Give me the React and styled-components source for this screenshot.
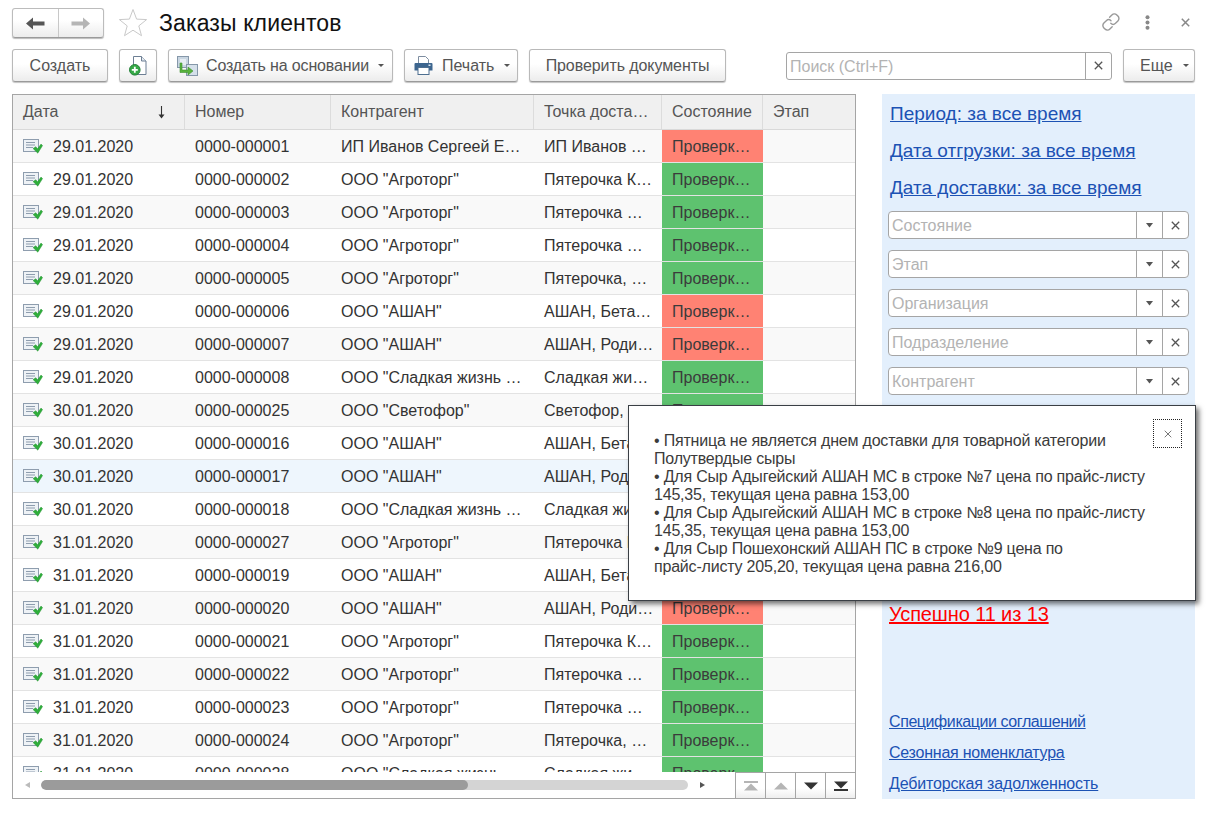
import React from "react";
import styled, { createGlobalStyle } from "styled-components";

const Global = createGlobalStyle`
  html, body { margin: 0; padding: 0; background: #fff; }
  body { font-family: "Liberation Sans", Arial, sans-serif; font-size: 16px; color: #333; }
`;

const Page = styled.div`
  position: relative; width: 1214px; height: 814px; overflow: hidden; box-sizing: border-box;
  padding: 8px 19px 0 12px; display: flex; flex-direction: column;
`;
const TitleRow = styled.div`display: flex; align-items: center; height: 30px;`;
const NavGroup = styled.div`
  display: flex; width: 92px; height: 30px; box-sizing: border-box; border: 1px solid #bcbcbc; border-bottom-color: #9a9a9a;
  border-radius: 3px; background: linear-gradient(#fff 40%, #ececec);
  box-shadow: 0 1px 1px #bbb;
`;
const NavCell = styled.div`
  flex: 1; display: flex; align-items: center; justify-content: center;
  & + & { border-left: 1px solid #c8c8c8; }
`;
const StarBox = styled.div`margin: 0 11px 0 14px; width: 30px; height: 30px; display: flex;`;
const Title = styled.h1`margin: 0; font-weight: 400; font-size: 23px; letter-spacing: .13px; color: #111; flex: 1; line-height: 30px;`;
const Window = styled.div`display: flex; align-items: center; margin: 0 5px 2px 0;`;
const WinIcon = styled.div`display: flex; align-items: center; justify-content: center; margin-left: ${p => p.$gap}px;`;

const Toolbar = styled.div`display: flex; align-items: center; margin-top: 11px; height: 33px;`;
const Btn = styled.div`
  box-sizing: border-box; height: 33px; width: ${p => p.$w}px; margin-left: ${p => p.$gap || 0}px; flex: none;
  padding-left: ${p => p.$pl || 0}px;
  display: flex; align-items: center; justify-content: ${p => p.$center ? "center" : "flex-start"};
  border: 1px solid #b9b9b9; border-bottom-color: #9a9a9a; border-radius: 3px;
  background: linear-gradient(#fff 45%, #ececec);
  box-shadow: 0 1px 1px #c4c4c4;
  color: #555; font-size: 16px; white-space: nowrap; letter-spacing: ${p => p.$ls || 0}px;
`;
const BtnIcon = styled.span`display: flex; margin-right: ${p => p.$mr}px;`;
const Caret = styled.span`
  width: 0; height: 0; border: 3px solid transparent; border-top: 3px solid #555; border-bottom: 0;
  margin-left: ${p => p.$ml}px; flex: none;
`;
const Search = styled.div`
  margin-left: 60px; width: 326px; height: 28px; box-sizing: border-box; display: flex; flex: none;
  border: 1px solid #a5a5a5; border-radius: 3px; background: #fff;
`;
const Placeholder = styled.div`flex: 1; padding-left: 3px; color: #b3b3b3; font-size: 16px; line-height: 28px; white-space: nowrap;`;
const FieldBtn = styled.div`width: 26px; box-sizing: border-box; flex: none; border-left: 1px solid #a5a5a5; display: flex; align-items: center; justify-content: center;`;

const Main = styled.div`display: flex; margin-top: 12px; height: 705px;`;
const Table = styled.div`
  width: 844px; box-sizing: border-box; border: 1px solid #a5a5a5; display: flex; flex-direction: column; flex: none;
`;
const Cols = "172px 146px 203px 128px 101px 92px";
const Head = styled.div`
  display: grid; grid-template-columns: ${Cols}; height: 35px; box-sizing: border-box; flex: none;
  background: #f0f0f0; border-bottom: 1px solid #d9d9d9;
`;
const HeadCell = styled.div`
  position: relative; box-sizing: border-box; padding-left: 10px; line-height: 33px; color: #555; white-space: nowrap;
  border-right: ${p => p.$last ? 0 : "1px solid #dcdcdc"}; font-size: 16px;
`;
const SortArrow = styled.span`position: absolute; right: 18px; top: 11px; display: flex;`;
const Body = styled.div`height: 642px; overflow: hidden; flex: none;`;
const Row = styled.div`
  display: grid; grid-template-columns: ${Cols}; height: 33px; box-sizing: border-box; border-bottom: 1px solid #e3e3e3;
  background: ${p => p.$sel ? "#eef6fd" : p.$odd ? "#f9f9f9" : "#fff"};
`;
const Cell = styled.div`
  box-sizing: border-box; padding-left: 10px; line-height: 34px; color: #333; white-space: nowrap; overflow: hidden; font-size: 16px;
`;
const DateCell = styled(Cell)`display: flex; align-items: flex-start;`;
const DocWrap = styled.span`display: flex; margin: 8px 10px 0 0; flex: none;`;
const StateCell = styled(Cell)`background: ${p => p.$c === "r" ? "#ff8273" : "#5ec26f"}; color: #3b3b3b;`;
const Footer = styled.div`display: flex; align-items: stretch; flex: 1; background: #fff; position: relative;`;
const ScrollArea = styled.div`flex: 1; display: flex; align-items: center; padding-left: 12px;`;
const Track = styled.div`margin-left: 11px; width: 647px; height: 10px; border-radius: 5px; background: #d4d4d4; overflow: hidden; flex: none;`;
const Thumb = styled.div`height: 10px; border-radius: 5px; background: #9b9b9b;`;
const ArrowL = styled.span`width: 0; height: 0; border: 3px solid transparent; border-right: 5px solid #bbb; border-left: 0; flex: none;`;
const ArrowR = styled.span`width: 0; height: 0; border: 3px solid transparent; border-left: 5px solid #555; border-right: 0; margin-left: 12px; flex: none;`;
const PageBtn = styled.div`
  width: 30px; box-sizing: border-box; display: flex; align-items: center; justify-content: center;
  border-left: 1px solid #a5a5a5; border-top: 1px solid #a5a5a5; background: linear-gradient(#fff 60%, #eee); flex: none;
`;

const Side = styled.div`
  margin-left: 26px; width: 313px; box-sizing: border-box; background: #e3effc; padding: 9px 6px 0 6px;
  display: flex; flex-direction: column; flex: none;
`;
const BigLink = styled.a`
  display: block; align-self: flex-start; margin: 0 0 15px 2px; font-size: 19px; line-height: 22px; color: #1c52b4; text-decoration: underline; white-space: nowrap;
`;
const Field = styled.div`
  display: flex; height: 28px; box-sizing: border-box; border: 1px solid #a5a5a5; border-radius: 4px; background: #fff;
  width: 301px; margin-bottom: 11px; flex: none;
`;
const RedLink = styled.a`
  display: block; align-self: flex-start; margin: 196px 0 0 1px; font-size: 20px; letter-spacing: -.12px; line-height: 24px; color: #f00; text-decoration: underline; white-space: nowrap;
`;
const Spacer = styled.div`flex: 1;`;
const SmallLink = styled.a`
  display: block; align-self: flex-start; margin: 0 0 13px 1px; font-size: 16px; letter-spacing: ${p => p.$ls}px; line-height: 18px; color: #1c52b4; text-decoration: underline; white-space: nowrap;
`;

const Popup = styled.div`
  position: absolute; left: 628px; top: 405px; width: 568px; height: 196px; box-sizing: border-box;
  background: #fff; border: 1px solid #3a3f45; box-shadow: 3px 3px 5px rgba(0,0,0,.55);
  padding: 26px 25px 0 25px; font-size: 16px; line-height: 18px; color: #3b3b3b; letter-spacing: -.2px;
`;
const PopLine = styled.div`white-space: nowrap;`;
const PopClose = styled.div`
  position: absolute; right: 13px; top: 13px; width: 29px; height: 29px; box-sizing: border-box; border: 1px dotted #222;
  display: flex; align-items: center; justify-content: center;
`;

const Cross = ({ s = 9, c = "#555", w = 1.3 }) => (
  <svg width={s} height={s} viewBox="0 0 9 9"><path d="M.8.8l7.4 7.4M8.2.8L.8 8.2" stroke={c} strokeWidth={w} fill="none" /></svg>
);
const FieldCaret = () => (
  <svg width="7" height="5" viewBox="0 0 7 5"><path d="M0 0h7L3.5 4.5z" fill="#555" /></svg>
);
const NavArrow = ({ c, flip }) => (
  <svg width="19" height="13" viewBox="0 0 19 13" style={flip ? { transform: "scaleX(-1)" } : undefined}>
    <path d="M0 6.5L7 .5v4h11.5v4H7v4z" fill={c} />
  </svg>
);
const Star = () => (
  <svg width="30" height="30" viewBox="0 0 30 30">
    <path d="M15 1.5l3.6 9.6 10 .5-7.8 6.3 2.7 9.8L15 22.2l-8.5 5.5 2.7-9.8-7.8-6.3 10-.5z" fill="#fff" stroke="#c9c9c9" strokeWidth="1" />
  </svg>
);
const LinkIcon = () => (
  <svg width="20" height="20" viewBox="0 0 20 20" fill="none" stroke="#999" strokeWidth="1.4" strokeLinecap="round">
    <path d="M8.6 5.2l2.3-2.3a3.4 3.4 0 0 1 4.9 0l1.1 1.1a3.4 3.4 0 0 1 0 4.9l-2.4 2.4a3.4 3.4 0 0 1-4.7 0" />
    <path d="M11.2 14.8l-2.3 2.3a3.4 3.4 0 0 1-4.9 0l-1.1-1.1a3.4 3.4 0 0 1 0-4.9l2.4-2.4a3.4 3.4 0 0 1 4.7 0" />
  </svg>
);
const Dots = () => (
  <svg width="5" height="15" viewBox="0 0 5 15" fill="#888"><circle cx="2.5" cy="2.2" r="2" /><circle cx="2.5" cy="7.5" r="2" /><circle cx="2.5" cy="12.8" r="2" /></svg>
);
const NewDoc = () => (
  <svg width="18" height="20" viewBox="0 0 18 20">
    <path d="M4.5.5h8l4.5 4.5v13.5H4.5z" fill="#fff" stroke="#6d7f94" />
    <path d="M12.5.5V5H17" fill="#e5ebf1" stroke="#6d7f94" />
    <circle cx="5.8" cy="13.8" r="5.3" fill="#36a946" stroke="#24803a" />
    <path d="M5.8 10.8v6M2.8 13.8h6" stroke="#fff" strokeWidth="1.8" />
  </svg>
);
const BasedOn = () => (
  <svg width="21" height="20" viewBox="0 0 21 20">
    <rect x=".5" y=".5" width="11" height="11" fill="#c9d6e2" stroke="#8597a9" />
    <rect x="3" y="3" width="6" height="6" fill="#e6edf3" />
    <rect x="9.5" y="8.5" width="11" height="11" fill="#d5e0ea" stroke="#8597a9" />
    <path d="M5 7v7h6v-3l5 4-5 4v-2.5H3V7z" fill="#58b23c" stroke="#3e9130" strokeWidth=".6" />
  </svg>
);
const Printer = () => (
  <svg width="19" height="19" viewBox="0 0 19 19">
    <path d="M4.5.5h7l3 3v4h-10z" fill="#fff" stroke="#7d8da0" />
    <path d="M1.5 7h16a1 1 0 0 1 1 1v6.5h-18V8a1 1 0 0 1 1-1z" fill="#3d668f" />
    <rect x="4" y="11.5" width="11" height="7" fill="#fff" stroke="#4e6f90" />
    <rect x="14.5" y="8.5" width="2" height="1.5" fill="#dfe7ef" />
  </svg>
);
const DocCheck = () => (
  <svg width="20" height="17" viewBox="0 0 20 17">
    <rect x=".5" y="1.5" width="15" height="12" fill="#eef2f6" stroke="#8e9dae" />
    <path d="M3 4.5h9M3 7h9M3 9.5h7" stroke="#8e9dae" strokeWidth="1" />
    <path d="M10 10.5l2.8-1.8 1.8 2.1L18 6l1.6 1.6-4.8 7.6z" fill="#2fae3b" stroke="#1f8a2c" strokeWidth=".4" />
  </svg>
);
const Sort = () => (
  <svg width="9" height="13" viewBox="0 0 9 13"><path d="M4.5 0v11" stroke="#333" strokeWidth="1.1" /><path d="M1.5 8.5h6L4.5 12.5z" fill="#333" /></svg>
);
const PageIcon = ({ c, up, bar }) => (
  <svg width="14" height="10" viewBox="0 0 14 10" style={up ? undefined : { transform: "scaleY(-1)" }}>
    {bar && <rect x="0" y="0" width="14" height="2" fill={c} />}
    <path d={bar ? "M7 2.5L14 9.5H0z" : "M7 1.5L14 8.5H0z"} fill={c} />
  </svg>
);

const AG = 'ООО "Агроторг"', AS = 'ООО "АШАН"', SL = 'ООО "Сладкая жизнь …';
const rows = [
  ["29.01.2020", "0000-000001", "ИП Иванов Сергеей Е…", "ИП Иванов …", "r"],
  ["29.01.2020", "0000-000002", AG, "Пятерочка К…", "g"],
  ["29.01.2020", "0000-000003", AG, "Пятерочка …", "g"],
  ["29.01.2020", "0000-000004", AG, "Пятерочка …", "g"],
  ["29.01.2020", "0000-000005", AG, "Пятерочка, …", "g"],
  ["29.01.2020", "0000-000006", AS, "АШАН, Бета…", "r"],
  ["29.01.2020", "0000-000007", AS, "АШАН, Роди…", "r"],
  ["29.01.2020", "0000-000008", SL, "Сладкая жи…", "g"],
  ["30.01.2020", "0000-000025", 'ООО "Светофор"', "Светофор, …", "g"],
  ["30.01.2020", "0000-000016", AS, "АШАН, Бета…", "g"],
  ["30.01.2020", "0000-000017", AS, "АШАН, Роди…", "g"],
  ["30.01.2020", "0000-000018", SL, "Сладкая жи…", "g"],
  ["31.01.2020", "0000-000027", AG, "Пятерочка К…", "g"],
  ["31.01.2020", "0000-000019", AS, "АШАН, Бета…", "g"],
  ["31.01.2020", "0000-000020", AS, "АШАН, Роди…", "r"],
  ["31.01.2020", "0000-000021", AG, "Пятерочка К…", "g"],
  ["31.01.2020", "0000-000022", AG, "Пятерочка …", "g"],
  ["31.01.2020", "0000-000023", AG, "Пятерочка …", "g"],
  ["31.01.2020", "0000-000024", AG, "Пятерочка, …", "g"],
  ["31.01.2020", "0000-000028", SL, "Сладкая жи…", "g"],
];
const heads = ["Дата", "Номер", "Контрагент", "Точка доста…", "Состояние", "Этап"];
const filters = ["Состояние", "Этап", "Организация", "Подразделение", "Контрагент"];
const popLines = [
  "• Пятница не является днем доставки для товарной категории",
  "Полутвердые сыры",
  "• Для Сыр Адыгейский АШАН МС в строке №7 цена по прайс-листу",
  "145,35, текущая цена равна 153,00",
  "• Для Сыр Адыгейский АШАН МС в строке №8 цена по прайс-листу",
  "145,35, текущая цена равна 153,00",
  "• Для Сыр Пошехонский АШАН ПС в строке №9 цена по",
  "прайс-листу 205,20, текущая цена равна 216,00",
];

export default function App() {
  return (
    <Page>
      <Global />
      <TitleRow>
        <NavGroup>
          <NavCell><NavArrow c="#555" /></NavCell>
          <NavCell><NavArrow c="#b5b5b5" flip /></NavCell>
        </NavGroup>
        <StarBox><Star /></StarBox>
        <Title>Заказы клиентов</Title>
        <Window>
          <WinIcon $gap={0}><LinkIcon /></WinIcon>
          <WinIcon $gap={24}><Dots /></WinIcon>
          <WinIcon $gap={31}><Cross s={9} c="#888" w={1.5} /></WinIcon>
        </Window>
      </TitleRow>
      <Toolbar>
        <Btn $w={96} $center>Создать</Btn>
        <Btn $w={38} $gap={11} $center><NewDoc /></Btn>
        <Btn $w={225} $gap={11} $pl={8} $ls={-0.15}><BtnIcon $mr={8}><BasedOn /></BtnIcon>Создать на основании<Caret $ml={9} /></Btn>
        <Btn $w={114} $gap={11} $pl={9}><BtnIcon $mr={9}><Printer /></BtnIcon>Печать<Caret $ml={10} /></Btn>
        <Btn $w={197} $gap={11} $center $ls={-0.08}>Проверить документы</Btn>
        <Search>
          <Placeholder>Поиск (Ctrl+F)</Placeholder>
          <FieldBtn><Cross /></FieldBtn>
        </Search>
        <Btn $w={72} $gap={11} $pl={16}>Еще<Caret $ml={10} /></Btn>
      </Toolbar>
      <Main>
        <Table>
          <Head>
            {heads.map((h, i) => (
              <HeadCell key={h} $last={i === 5}>
                {h}{i === 0 && <SortArrow><Sort /></SortArrow>}
              </HeadCell>
            ))}
          </Head>
          <Body>
            {rows.map((r, i) => (
              <Row key={r[1]} $odd={i % 2 === 0} $sel={i === 10}>
                <DateCell><DocWrap><DocCheck /></DocWrap>{r[0]}</DateCell>
                <Cell>{r[1]}</Cell>
                <Cell>{r[2]}</Cell>
                <Cell>{r[3]}</Cell>
                <StateCell $c={r[4]}>Проверк…</StateCell>
                <Cell />
              </Row>
            ))}
          </Body>
          <Footer>
            <ScrollArea>
              <ArrowL />
              <Track><Thumb style={{ width: `${(427 / 647) * 100}%` }} /></Track>
              <ArrowR />
            </ScrollArea>
            <PageBtn><PageIcon c="#b5b5b5" up bar /></PageBtn>
            <PageBtn><PageIcon c="#b5b5b5" up /></PageBtn>
            <PageBtn><PageIcon c="#333" /></PageBtn>
            <PageBtn><PageIcon c="#333" bar /></PageBtn>
          </Footer>
        </Table>
        <Side>
          <BigLink>Период: за все время</BigLink>
          <BigLink>Дата отгрузки: за все время</BigLink>
          <BigLink style={{ marginBottom: 12 }}>Дата доставки: за все время</BigLink>
          {filters.map(f => (
            <Field key={f}>
              <Placeholder>{f}</Placeholder>
              <FieldBtn><FieldCaret /></FieldBtn>
              <FieldBtn><Cross /></FieldBtn>
            </Field>
          ))}
          <RedLink>Успешно 11 из 13</RedLink>
          <Spacer />
          <SmallLink $ls={-0.42}>Спецификации соглашений</SmallLink>
          <SmallLink $ls={-0.24}>Сезонная номенклатура</SmallLink>
          <SmallLink $ls={-0.16} style={{ marginBottom: 6 }}>Дебиторская задолженность</SmallLink>
        </Side>
      </Main>
      <Popup>
        {popLines.map((l, i) => <PopLine key={i}>{l}</PopLine>)}
        <PopClose><Cross s={8} c="#666" w={1} /></PopClose>
      </Popup>
    </Page>
  );
}
